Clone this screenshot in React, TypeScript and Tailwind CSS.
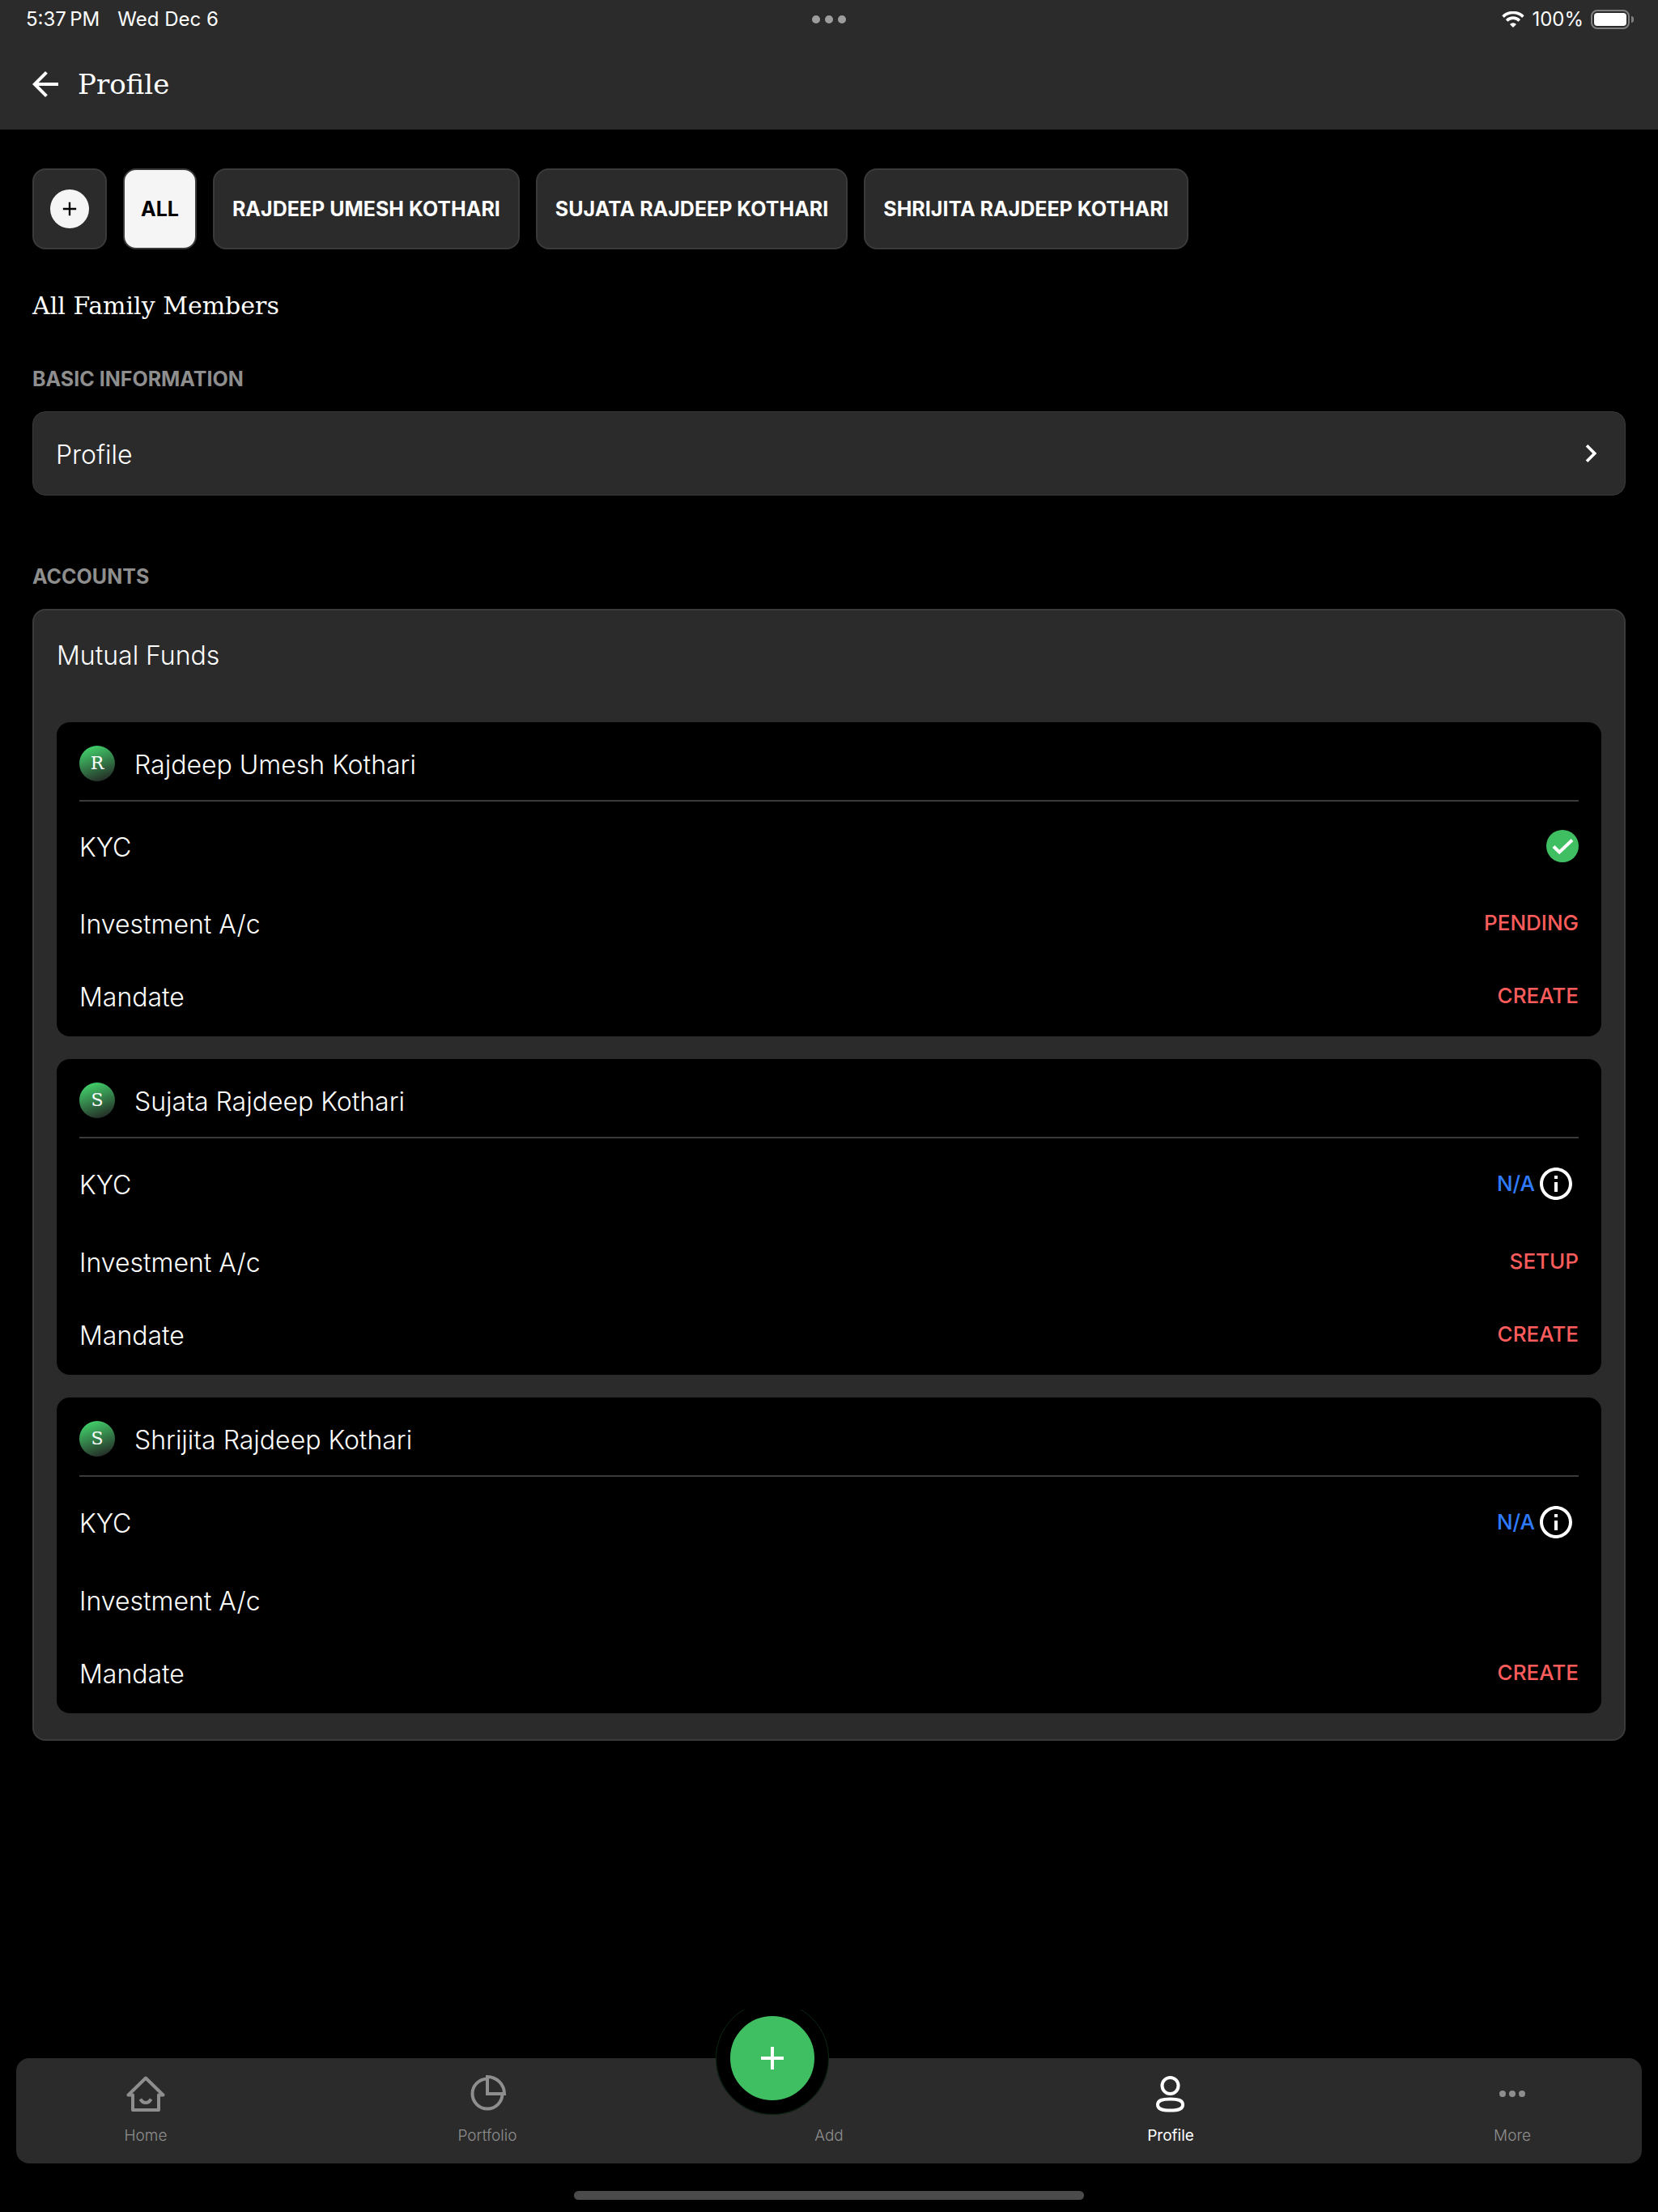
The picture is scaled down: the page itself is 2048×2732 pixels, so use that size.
import type { ReactNode } from "react"

type Row = {
  label: string
  status?: "done" | "na" | "pending" | "setup" | "create"
}

const tabs = ["ALL", "RAJDEEP UMESH KOTHARI", "SUJATA RAJDEEP KOTHARI", "SHRIJITA RAJDEEP KOTHARI"]

const members: { name: string; rows: Row[] }[] = [
  {
    name: "Rajdeep Umesh Kothari",
    rows: [
      { label: "KYC", status: "done" },
      { label: "Investment A/c", status: "pending" },
      { label: "Mandate", status: "create" },
    ],
  },
  {
    name: "Sujata Rajdeep Kothari",
    rows: [
      { label: "KYC", status: "na" },
      { label: "Investment A/c", status: "setup" },
      { label: "Mandate", status: "create" },
    ],
  },
  {
    name: "Shrijita Rajdeep Kothari",
    rows: [
      { label: "KYC", status: "na" },
      { label: "Investment A/c" },
      { label: "Mandate", status: "create" },
    ],
  },
]

function PlusIcon({ className }: { className: string }) {
  return (
    <svg viewBox="0 0 24 24" fill="currentColor" className={className} aria-hidden="true">
      <path d="M19 13h-6v6h-2v-6H5v-2h6V5h2v6h6z" />
    </svg>
  )
}

function StatusBar() {
  return (
    <div className="relative flex h-12 items-center justify-between pl-8 pr-[30px] text-[24px] leading-7">
      <div className="flex gap-[22px]">
        <span>5:37{"\u2009"}PM</span>
        <span>Wed Dec 6</span>
      </div>

      <div className="absolute inset-0 flex items-center justify-center gap-[6px]">
        <i className="size-[10px] rounded-full bg-[#9d9d9d]" />
        <i className="size-[10px] rounded-full bg-[#9d9d9d]" />
        <i className="size-[10px] rounded-full bg-[#9d9d9d]" />
      </div>

      <div className="flex items-center gap-[9px]">
        <svg viewBox="0 0 28 20" fill="none" className="h-5 w-7" aria-hidden="true">
          <path d="M1.6 6.6a17.6 17.6 0 0 1 24.8 0" stroke="white" strokeWidth="3.6" />
          <path d="M6.2 11.4a11 11 0 0 1 15.6 0" stroke="white" strokeWidth="3.6" />
          <path d="M14 20l-4-4.1a5.7 5.7 0 0 1 8 0z" fill="white" />
        </svg>
        <span>100%</span>
        <div className="flex items-center gap-[2px]">
          <div className="h-6 w-12 rounded-lg border-2 border-[#7f7f7f] p-[2px]">
            <div className="h-full rounded-[4px] bg-white" />
          </div>
          <div className="h-2 w-[3px] rounded-r-full bg-[#7f7f7f]" />
        </div>
      </div>
    </div>
  )
}

function Status({ status }: { status: Row["status"] }) {
  if (status === "done") {
    return (
      <svg viewBox="0 0 40 46" className="h-[46px] w-10" role="img" aria-label="Done">
        <circle cx="20" cy="23" r="20" fill="#40bf62" />
        <path d="M9 23.5l7.2 7L32 15.5" fill="none" stroke="white" strokeWidth="4" />
      </svg>
    )
  }
  if (status === "na") {
    return (
      <div className="mr-1 flex items-center gap-[2px]">
        <span className="text-[26px] font-medium leading-9 text-[#2f7bff]">N/A</span>
        <button aria-label="KYC info">
          <svg viewBox="0 0 24 24" fill="white" className="size-12" aria-hidden="true">
            <path d="M11 7h2v2h-2zm0 4h2v6h-2zm1-9C6.48 2 2 6.48 2 12s4.48 10 10 10 10-4.48 10-10S17.52 2 12 2zm0 18c-4.41 0-8-3.59-8-8s3.59-8 8-8 8 3.59 8 8-3.59 8-8 8z" />
          </svg>
        </button>
      </div>
    )
  }
  if (!status) return null
  return (
    <button className="text-[26px] font-medium uppercase leading-9 text-[#ff5c5c]">{status}</button>
  )
}

function NavItem({ label, active, children }: { label: string; active?: boolean; children?: ReactNode }) {
  return (
    <a
      href="#"
      className={
        active
          ? "flex w-20 flex-col items-center gap-4 font-normal text-white"
          : "flex w-20 flex-col items-center gap-4 font-light text-[#8e8e8e]"
      }
    >
      <span className="size-12">{children}</span>
      <span className="text-[19px] leading-6">{label}</span>
    </a>
  )
}

export default function App() {
  return (
    <div className="flex min-h-screen flex-col bg-black font-['Inter',sans-serif] text-white">
      <header className="bg-[#2b2b2b]">
        <StatusBar />
        <div className="flex h-28 items-center gap-4 px-8">
          <button aria-label="Back">
            <svg viewBox="0 0 24 24" fill="currentColor" className="size-12" aria-hidden="true">
              <path d="M20 11H7.83l5.59-5.59L12 4l-8 8 8 8 1.41-1.41L7.83 13H20z" />
            </svg>
          </button>
          <h1 className="font-['DejaVu_Serif',serif] text-[34px] leading-[44px]">Profile</h1>
        </div>
      </header>

      <main className="px-10 pb-16 pt-12">
        {/* family member tabs */}
        <div className="flex gap-5">
          <button
            aria-label="Add member"
            className="flex h-[100px] items-center rounded-2xl border-2 border-[#3a3a3a] bg-[#2b2b2b] px-5"
          >
            <span className="flex size-12 items-center justify-center rounded-full bg-[#f5f5f5] text-black">
              <PlusIcon className="size-7" />
            </span>
          </button>
          {tabs.map((tab, i) => (
            <button
              key={tab}
              className={
                i === 0
                  ? "h-[100px] rounded-2xl border-2 border-[#3a3a3a] bg-[#f5f5f5] px-5 pt-0.5 text-[25px] font-bold text-black"
                  : "h-[100px] rounded-2xl border-2 border-[#3a3a3a] bg-[#2b2b2b] px-[22px] pt-0.5 text-[25px] font-bold"
              }
            >
              {tab}
            </button>
          ))}
        </div>

        <h2 className="mt-12 font-['DejaVu_Serif',serif] text-[30px] leading-[44px]">All Family Members</h2>

        <h3 className="mt-[50px] text-[25px] font-bold leading-9 text-[#8e8e8e]">BASIC INFORMATION</h3>
        <a
          href="#"
          className="mt-[22px] flex h-[104px] items-center justify-between rounded-2xl border border-[#3a3a3a] bg-[#2b2b2b] pl-7 pr-5"
        >
          <span className="pt-1 text-[32px] font-light leading-10">Profile</span>
          <svg viewBox="0 0 24 24" fill="currentColor" className="size-11" aria-hidden="true">
            <path d="M10 6L8.59 7.41 13.17 12l-4.58 4.59L10 18l6-6z" />
          </svg>
        </a>

        <h3 className="mt-[82px] text-[25px] font-bold leading-9 text-[#8e8e8e]">ACCOUNTS</h3>
        <section className="mt-[22px] rounded-2xl border-2 border-[#3a3a3a] bg-[#2b2b2b] px-7 pb-8 pt-8">
          <h4 className="pt-1 text-[32px] font-light leading-10">Mutual Funds</h4>

          <div className="mt-[62px] flex flex-col gap-7">
            {members.map((member) => (
              <div key={member.name} className="rounded-2xl bg-black p-7">
                <div className="flex items-center gap-6 border-b-2 border-[#3a3a3a] pb-[22px]">
                  <span className="my-px flex size-11 items-center justify-center rounded-full bg-linear-[160deg,#42cf6a_10%,#232323_95%] font-['DejaVu_Serif',serif] text-[22px] leading-7">
                    {member.name[0]}
                  </span>
                  <span className="pt-1 text-[32px] font-light leading-10">{member.name}</span>
                </div>

                <div className="mt-8 flex flex-col gap-[46px]">
                  {member.rows.map((row) => (
                    <div key={row.label} className="flex items-center justify-between first:mb-1">
                      <span className="pt-1 text-[32px] font-light leading-10">{row.label}</span>
                      <Status status={row.status} />
                    </div>
                  ))}
                </div>
              </div>
            ))}
          </div>
        </section>
      </main>

      <footer className="mt-auto px-5 pb-[15px]">
        <nav className="relative flex h-[130px] justify-between rounded-2xl bg-[#2b2b2b] px-[120px] pt-5">
          <NavItem label="Home">
            <svg viewBox="0 0 48 48" fill="none" stroke="currentColor" strokeWidth="4" strokeLinejoin="round">
              <path d="M24 4.5L2.5 25.5H8V44h32V25.5h5.5z" />
              <path d="M17.5 30.5c3 6 10 6 13 0" />
            </svg>
          </NavItem>
          <NavItem label="Portfolio">
            <svg viewBox="0 0 48 48" fill="none" stroke="currentColor" strokeWidth="4">
              <path d="M24 5.5a18.5 18.5 0 1 0 18.5 18.5" />
              <path d="M24 3v21h21A21 21 0 0 0 24 3z" />
            </svg>
          </NavItem>
          <NavItem label="Add" />
          <NavItem label="Profile" active>
            <svg viewBox="0 0 48 48" fill="none" stroke="currentColor" strokeWidth="4">
              <circle cx="23.5" cy="14" r="10" />
              <path d="M23.5 30.5c-10 0-15.500 1.500-15.500 7s5.500 7 15.500 7 15.500-1.500 15.500-7-5.500-7-15.500-7z" />
            </svg>
          </NavItem>
          <NavItem label="More">
            <svg viewBox="0 0 48 48" fill="currentColor">
              <circle cx="12" cy="24" r="4" />
              <circle cx="24" cy="24" r="4" />
              <circle cx="36" cy="24" r="4" />
            </svg>
          </NavItem>

          {/* floating add button, sits left of the middle item */}
          <div className="absolute -top-[60px] right-1/2 h-[130px] w-[140px] overflow-hidden">
            <button
              aria-label="Add"
              className="absolute bottom-0 flex size-[140px] items-center justify-center rounded-full border-[18px] border-black bg-[#40bf62] outline outline-[#40bf62]/20 -outline-offset-1"
            >
              <PlusIcon className="size-12" />
            </button>
          </div>
        </nav>
        <div className="mx-auto mt-[34px] h-[11px] w-[630px] rounded-full bg-[#4b4b4b]" />
      </footer>
    </div>
  )
}
